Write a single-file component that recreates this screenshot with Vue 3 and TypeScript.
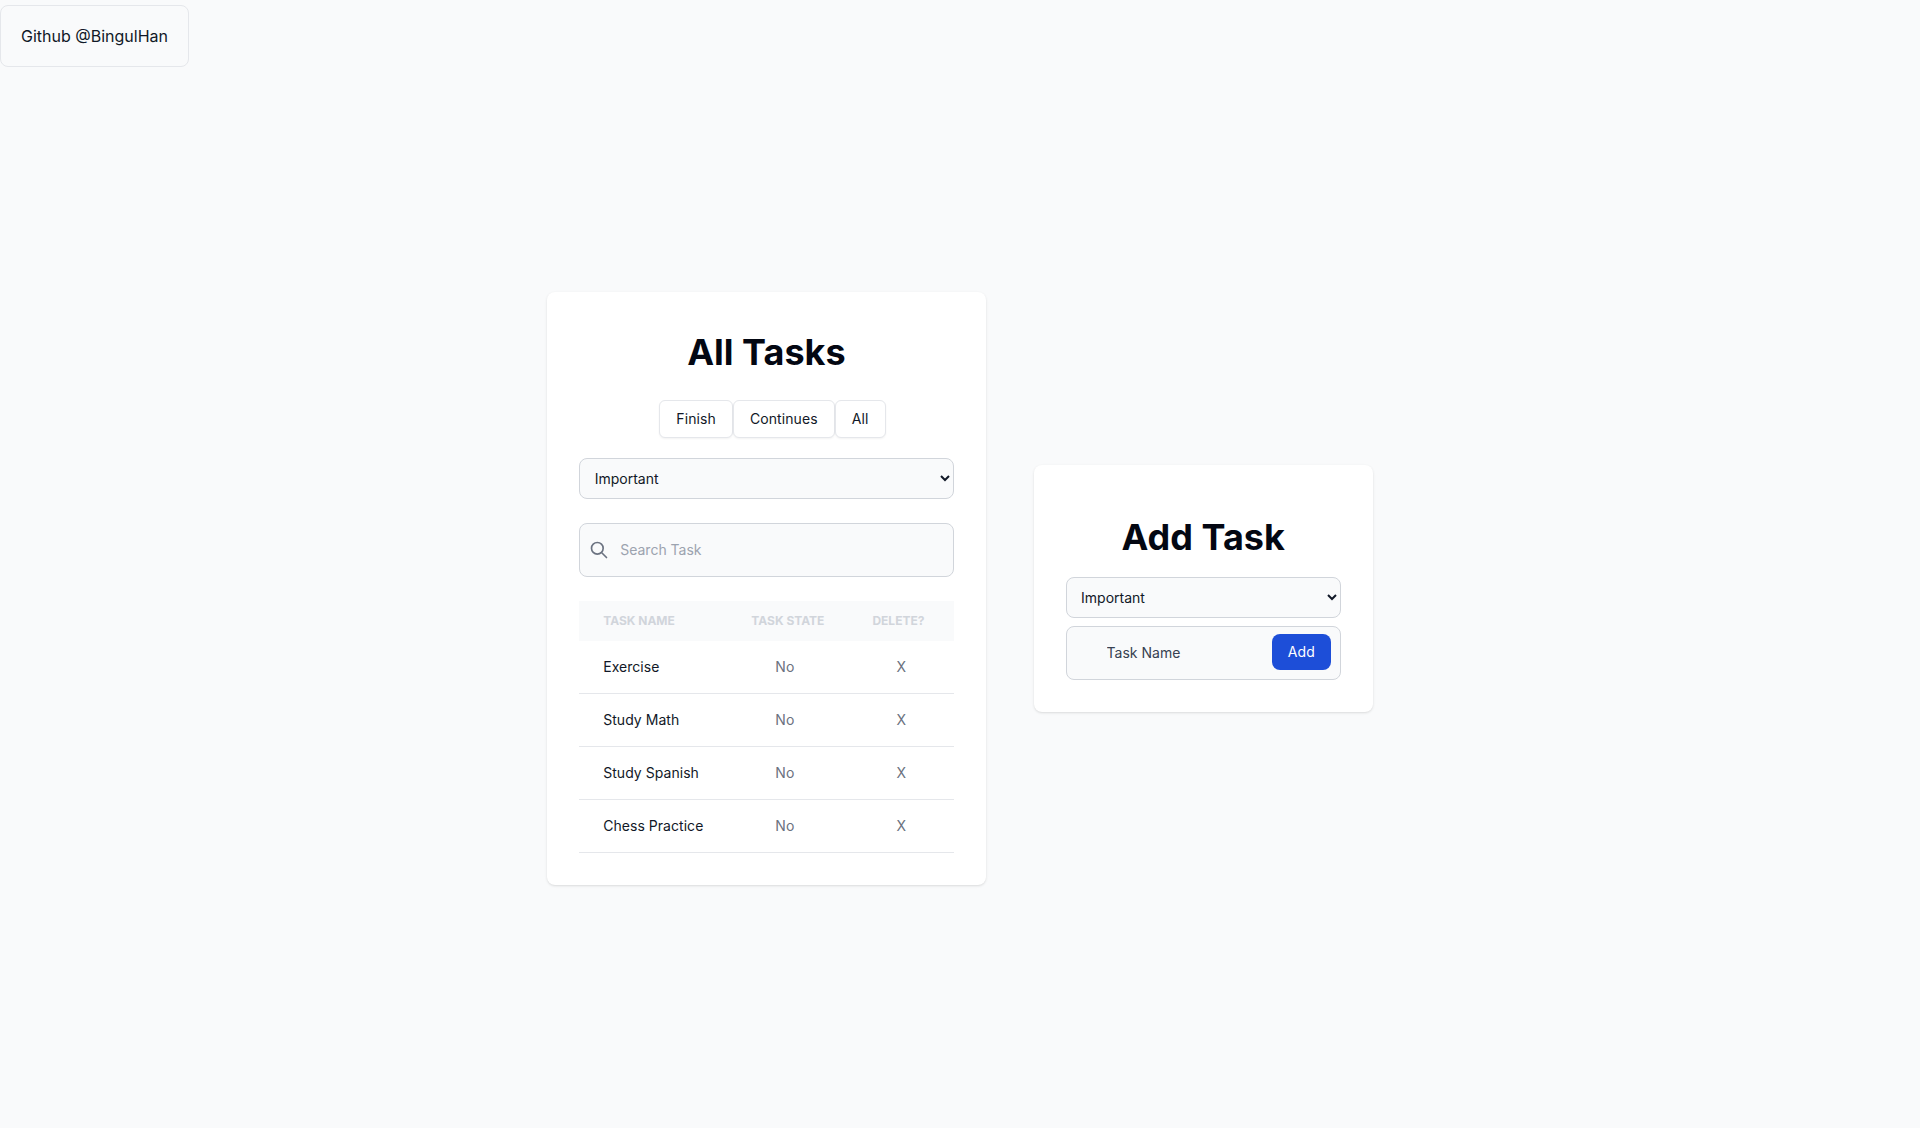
<script setup lang="ts">
const filters: string[] = ['Finish', 'Continues', 'All']
const tasks: string[] = ['Exercise', 'Study Math', 'Study Spanish', 'Chess Practice']
</script>

<template>
  <div class="page">
    <a class="github">Github @BingulHan</a>
    <main class="board">
      <section class="card list-card">
        <h1 class="title all-title">All Tasks</h1>
        <div class="filters">
          <button v-for="f in filters" :key="f" type="button" class="filter">{{ f }}</button>
        </div>
        <select class="select list-select">
          <option>Important</option>
        </select>
        <div class="field search">
          <svg class="icon" viewBox="0 0 24 24" fill="none" stroke="currentColor" stroke-width="2" stroke-linecap="round" stroke-linejoin="round" aria-hidden="true">
            <path d="M21 21l-6-6m2-5a7 7 0 11-14 0 7 7 0 0114 0z" />
          </svg>
          <input class="input" type="text" placeholder="Search Task" />
        </div>
        <table class="table">
          <thead>
            <tr>
              <th>Task Name</th>
              <th>Task State</th>
              <th>Delete?</th>
            </tr>
          </thead>
          <tbody>
            <tr v-for="t in tasks" :key="t">
              <td class="name">{{ t }}</td>
              <td class="cell">No</td>
              <td class="cell">X</td>
            </tr>
          </tbody>
        </table>
      </section>

      <section class="card add-card">
        <h1 class="title add-title">Add Task</h1>
        <select class="select">
          <option>Important</option>
        </select>
        <div class="field add-field">
          <input class="input dark" type="text" placeholder="Task Name" />
          <button type="button" class="add">Add</button>
        </div>
      </section>
    </main>
  </div>
</template>

<style scoped>
.page {
  min-height: 1110px;
  font-family: Inter, "Liberation Sans", sans-serif;
  color: #111827;
}
.github {
  display: block;
  box-sizing: border-box;
  width: 189px;
  height: 62px;
  margin-top: 5px;
  padding: 18px 20px;
  border: 1px solid #e5e7eb;
  border-radius: 8px;
  font-size: 16px;
  line-height: 24px;
}
.board {
  display: flex;
  align-items: center;
  justify-content: center;
  gap: 48px;
  height: 1043px;
}
.card {
  box-sizing: border-box;
  padding: 32px;
  background: #fff;
  border-radius: 8px;
  box-shadow: 0 1px 3px rgba(0, 0, 0, 0.1), 0 1px 2px -1px rgba(0, 0, 0, 0.1);
  display: flex;
  flex-direction: column;
  flex: none;
}
.list-card {
  width: 438.4px;
}
.add-card {
  width: 339.2px;
}
.title {
  margin: 0;
  font-size: 36px;
  line-height: 40px;
  font-weight: 700;
  text-align: center;
  color: #030712;
}
.all-title {
  margin-top: 8px;
  margin-bottom: 28px;
}
.add-title {
  margin-top: 20px;
  margin-bottom: 20px;
}
.filters {
  display: flex;
  justify-content: center;
  padding-left: 12px;
  margin-bottom: 20px;
}
.filter {
  padding: 8px 16px;
  background: #fff;
  border: 1px solid #e5e7eb;
  border-radius: 6px;
  font: 400 14px/20px Inter, sans-serif;
  letter-spacing: 0.1px;
  color: #111827;
  box-shadow: 0 1px 2px rgba(0, 0, 0, 0.05);
}
.select {
  box-sizing: border-box;
  width: 100%;
  height: 41px;
  padding: 10px 9px 10px 10.5px;
  background-color: #f9fafb;
  border: 1px solid #d1d5db;
  border-radius: 8px;
  font: 400 14px/20px Inter, sans-serif;
  color: #111827;
}
.list-select {
  margin-bottom: 24px;
}
.field {
  position: relative;
  box-sizing: border-box;
  width: 100%;
  height: 54px;
  background: #f9fafb;
  border: 1px solid #d1d5db;
  border-radius: 8px;
  display: flex;
  align-items: center;
}
.search {
  margin-bottom: 24px;
}
.add-field {
  margin-top: 8px;
}
.icon {
  position: absolute;
  left: 9px;
  top: 16px;
  width: 20px;
  height: 20px;
  color: #6b7280;
}
.input {
  flex: 1;
  min-width: 0;
  box-sizing: border-box;
  height: 100%;
  padding: 0 0 1px 40px;
  background: transparent;
  border: 0;
  outline: 0;
  font: 400 14px/20px Inter, sans-serif;
  color: #111827;
}
.input::placeholder {
  color: #9ca3af;
}
.input.dark::placeholder {
  color: #374151;
}
.add {
  position: absolute;
  right: 9px;
  top: 7px;
  height: 36px;
  width: 59px;
  padding: 0;
  background: #1d4ed8;
  border: 0;
  border-radius: 8px;
  font: 400 14px/20px Inter, sans-serif;
  letter-spacing: 0.1px;
  color: #fff;
}
.table {
  width: 100%;
  border-collapse: collapse;
  font-size: 14px;
  line-height: 20px;
  text-align: left;
}
.table th {
  padding: 12px 24px;
  background: #f9fafb;
  font-size: 12px;
  line-height: 16px;
  font-weight: 700;
  text-transform: uppercase;
  color: #d1d5db;
  white-space: nowrap;
}
.table td {
  padding: 16px 48px;
  border-bottom: 1px solid #e5e7eb;
  white-space: nowrap;
}
.table td.name {
  padding: 16px 24px;
  font-weight: 400;
  letter-spacing: 0.04px;
  color: #111827;
}
.table td.cell {
  color: #6b7280;
}
</style>

<style>
html,
body {
  margin: 0;
  background: #f9fafb;
}
</style>
